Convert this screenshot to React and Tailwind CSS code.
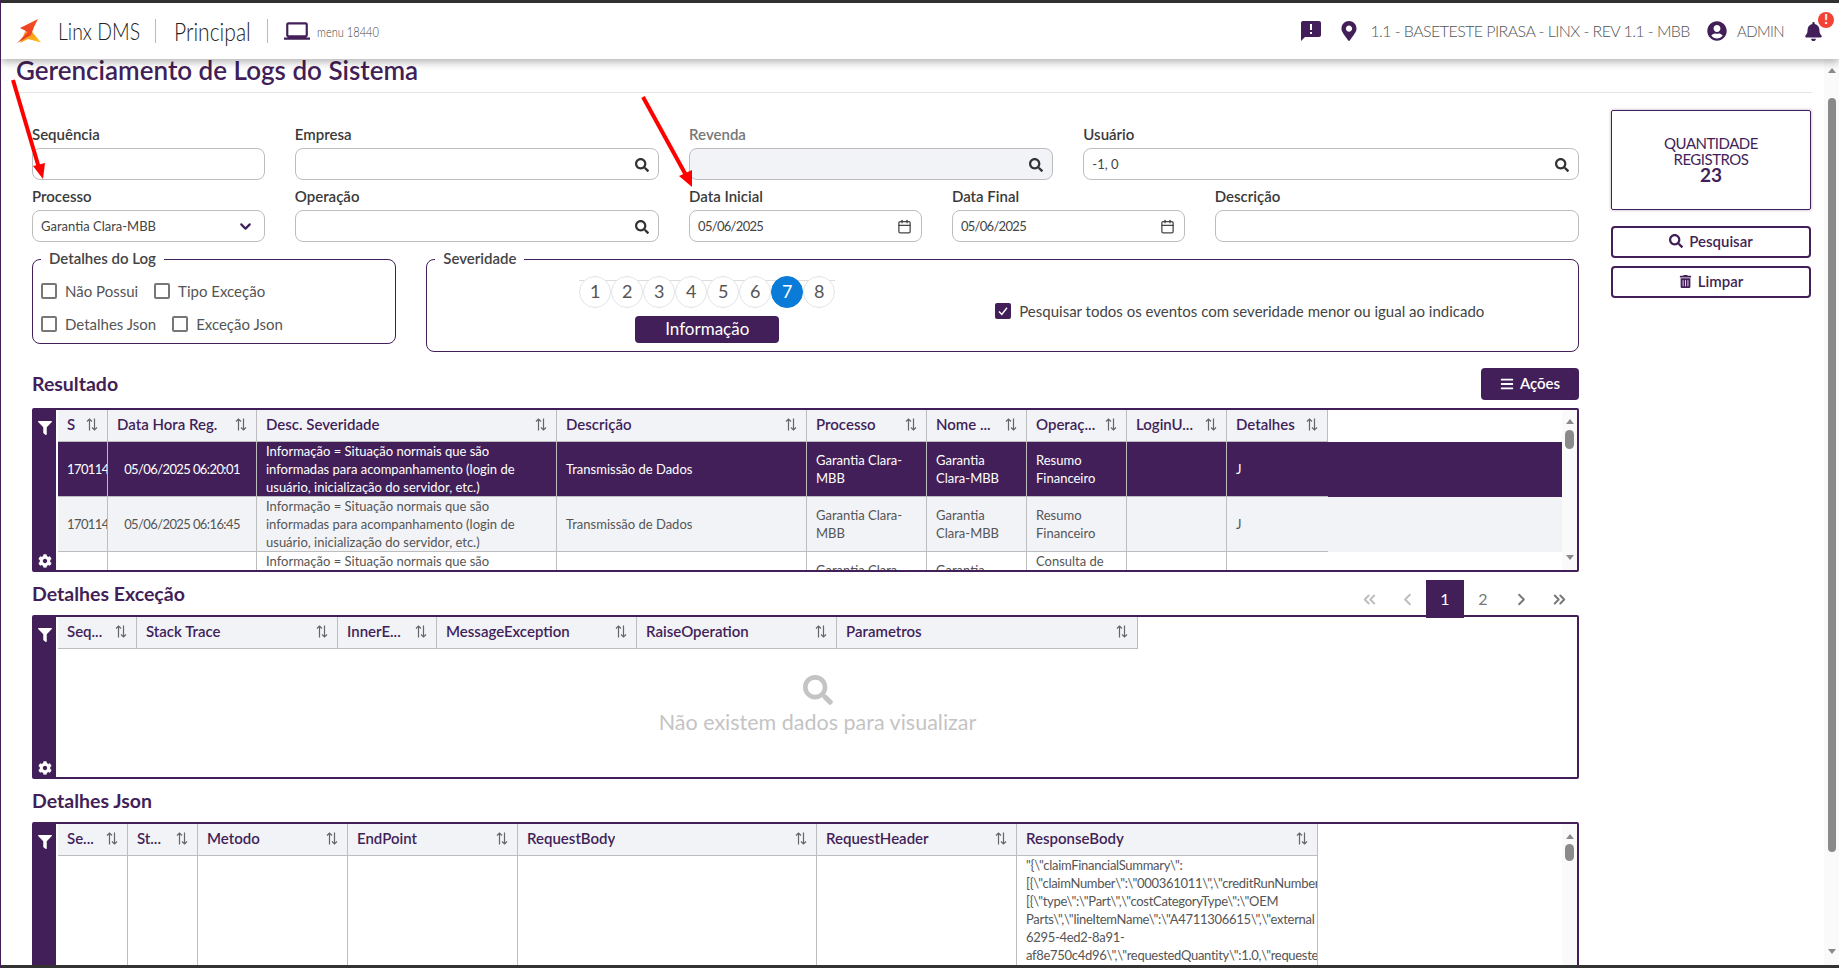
import React from 'react';
import { Calendar, ChevronDown, ChevronLeft, ChevronRight, ChevronsLeft, ChevronsRight } from 'lucide-react';
import { FaBars, FaBell, FaCog, FaFilter, FaMapMarkerAlt, FaSearch, FaTrashAlt, FaUserCircle } from 'react-icons/fa';
import { MdAnnouncement, MdLaptop } from 'react-icons/md';

const purple = 'text-[#421f58]';

const descSeveridade = 'Informação = Situação normais que são informadas para acompanhamento (login de usuário, inicialização do servidor, etc.)';

const resultCols = [
  { w: 'w-[50px]', label: 'S' },
  { w: 'w-[149px]', label: 'Data Hora Reg.' },
  { w: 'w-[300px]', label: 'Desc. Severidade' },
  { w: 'w-[250px]', label: 'Descrição' },
  { w: 'w-[120px]', label: 'Processo' },
  { w: 'w-[100px]', label: 'Nome ...' },
  { w: 'w-[100px]', label: 'Operaç...' },
  { w: 'w-[100px]', label: 'LoginU...' },
  { w: 'w-[101px]', label: 'Detalhes' },
];

const resultRows = [
  ['170114', '05/06/2025 06:20:01', descSeveridade, 'Transmissão de Dados', 'Garantia Clara-MBB', 'Garantia Clara-MBB', 'Resumo Financeiro', '', 'J'],
  ['170114', '05/06/2025 06:16:45', descSeveridade, 'Transmissão de Dados', 'Garantia Clara-MBB', 'Garantia Clara-MBB', 'Resumo Financeiro', '', 'J'],
  ['', '', descSeveridade, '', 'Garantia Clara-MBB', 'Garantia Clara-MBB', 'Consulta de Resumo Financeiro', '', ''],
];

const excecaoCols = [
  { w: 'w-[79px]', label: 'Seq...' },
  { w: 'w-[201px]', label: 'Stack Trace' },
  { w: 'w-[99px]', label: 'InnerE...' },
  { w: 'w-[200px]', label: 'MessageException' },
  { w: 'w-[200px]', label: 'RaiseOperation' },
  { w: 'w-[301px]', label: 'Parametros' },
];

const jsonCols = [
  { w: 'w-[70px]', label: 'Se...' },
  { w: 'w-[70px]', label: 'St...' },
  { w: 'w-[150px]', label: 'Metodo' },
  { w: 'w-[170px]', label: 'EndPoint' },
  { w: 'w-[299px]', label: 'RequestBody' },
  { w: 'w-[200px]', label: 'RequestHeader' },
  { w: 'w-[301px]', label: 'ResponseBody' },
];

const responseLines = [
  '"{\\"claimFinancialSummary\\":',
  '[{\\"claimNumber\\":\\"000361011\\",\\"creditRunNumber',
  '[{\\"type\\":\\"Part\\",\\"costCategoryType\\":\\"OEM',
  'Parts\\",\\"lineItemName\\":\\"A4711306615\\",\\"external',
  '6295-4ed2-8a91-',
  'af8e750c4d96\\",\\"requestedQuantity\\":1.0,\\"requeste',
];

function SortIcon() {
  return (
    <svg viewBox="0 0 12 13" className="h-[13px] w-3 shrink-0 text-[#666]" fill="none" stroke="currentColor" strokeWidth="1.2">
      <path d="M3.5 12.5V1M1 3.5L3.5 1L6 3.5" />
      <path d="M8.5 .5V12M6 9.5L8.5 12L11 9.5" />
    </svg>
  );
}

function Field({ label, span, disabled, value, icon }) {
  return (
    <div className={span}>
      <div className={`mb-[3px] h-5 text-[15px] leading-[18px] font-semibold ${disabled ? 'text-[#777]' : 'text-[#3a3a3a]'}`}>{label}</div>
      <div className="relative">
        <input
          readOnly
          value={value || ''}
          className={`block h-8 w-full rounded-lg border border-[#bdbdbd] px-2 text-[13px] text-[#444] outline-none ${icon === 'date' ? 'tracking-[-0.7px]' : ''} ${disabled ? 'bg-[#f1f3f7]' : 'bg-white'}`}
        />
        {icon === 'search' && <FaSearch className="absolute top-[10px] right-[10px] text-[#333]" size={14} />}
        {icon === 'date' && <Calendar className="absolute top-[9px] right-[10px] text-[#444]" size={15} />}
        {icon === 'select' && <ChevronDown className={`absolute top-2 right-[11px] ${purple}`} size={17} strokeWidth={3} />}
      </div>
    </div>
  );
}

function Check({ label }) {
  return (
    <label className="flex h-5 items-center gap-2 text-[15px] text-[#555]">
      <input type="checkbox" className="h-4 w-4 appearance-none rounded-[2px] border-2 border-[#777] bg-white" />
      {label}
    </label>
  );
}

function Triangle({ down }) {
  return (
    <svg viewBox="0 0 8 5" className="h-[5px] w-2 shrink-0 text-[#8a8a8a]" fill="currentColor">
      <path d={down ? 'M0 0H8L4 5Z' : 'M0 5H8L4 0Z'} />
    </svg>
  );
}

function TableShell({ height, children }) {
  return (
    <div className={`flex overflow-hidden rounded-[2px] border-2 border-[#421f58] ${height}`}>
      <div className="mr-[2px] flex w-[22px] shrink-0 flex-col items-center justify-between bg-[#421f58] pt-[11px] pb-[2px] text-white">
        <FaFilter size={14} />
        <FaCog size={14} />
      </div>
      {children}
    </div>
  );
}

function HeadRow({ cols }) {
  return (
    <thead>
      <tr>
        {cols.map((c) => (
          <th key={c.label} className="h-[32px] border-r border-b border-[#bdbdbd] bg-[#f1f3f7] p-0 pr-[9px] pb-[2px] pl-[9px] text-left text-[15px] font-semibold text-[#421f58] last:border-r-0">
            <span className="flex items-center justify-between">
              <span className="truncate whitespace-nowrap">{c.label}</span>
              <SortIcon />
            </span>
          </th>
        ))}
        <th className="p-0" />
      </tr>
    </thead>
  );
}

function ResultTable() {
  return (
    <TableShell height="h-[164px]">
      <div className="min-w-0 flex-1 overflow-hidden">
        <table className="w-full table-fixed border-separate border-spacing-0">
          <colgroup>
            {resultCols.map((c) => <col key={c.label} className={c.w} />)}
            <col />
          </colgroup>
          <HeadRow cols={resultCols} />
          <tbody>
            {resultRows.map((row, i) => (
              <tr key={i} className={i === 0 ? 'bg-[#421f58] text-white' : i === 1 ? 'bg-[#f1f3f7] text-[#555]' : 'bg-white text-[#555]'}>
                {row.map((cell, j) => (
                  <td
                    key={j}
                    className={`h-[55px] overflow-hidden border-r border-b border-[#bdbdbd] py-0 text-[13px] leading-[18px] ${j === 1 ? 'px-0 text-center tracking-[-0.6px]' : 'pr-2 pl-[9px]'} ${j === 0 ? 'whitespace-nowrap pr-0 tracking-[-0.6px]' : ''} ${j === 8 ? 'border-r-0' : ''}`}
                  >
                    {cell}
                  </td>
                ))}
                <td />
              </tr>
            ))}
          </tbody>
        </table>
      </div>
      <div className="flex w-[15px] shrink-0 flex-col items-center bg-[#fafafa] pt-[9px]">
        <Triangle />
        <div className="mt-[6px] h-[19px] w-[9px] rounded-full bg-[#8a8a8a]" />
        <div className="mt-auto mb-[10px]"><Triangle down /></div>
      </div>
    </TableShell>
  );
}

function ExcecaoTable() {
  return (
    <TableShell height="h-[164px]">
      <div className="min-w-0 flex-1 overflow-hidden">
        <table className="w-full table-fixed border-separate border-spacing-0">
          <colgroup>
            {excecaoCols.map((c) => <col key={c.label} className={c.w} />)}
            <col />
          </colgroup>
          <HeadRow cols={excecaoCols} />
        </table>
        <div className="flex flex-col items-center pt-[26px]">
          <FaSearch className="text-[#c4c4c4]" size={30} />
          <div className="mt-[3px] text-[21.5px] leading-7 text-[#c4c4c4]">Não existem dados para visualizar</div>
        </div>
      </div>
    </TableShell>
  );
}

function JsonTable() {
  return (
    <TableShell height="h-[240px]">
      <div className="min-w-0 flex-1 overflow-hidden">
        <table className="w-full table-fixed border-separate border-spacing-0">
          <colgroup>
            {jsonCols.map((c) => <col key={c.label} className={c.w} />)}
            <col />
          </colgroup>
          <HeadRow cols={jsonCols} />
          <tbody>
            <tr className="text-[#555]">
              {jsonCols.map((c, j) => (
                <td key={c.label} className="h-[200px] overflow-hidden border-r border-[#bdbdbd] py-0 pl-[9px] align-top text-[13px] leading-[18px] tracking-[-0.3px] last:border-r-0">
                  {j === 6 && responseLines.map((l) => <div key={l} className="whitespace-nowrap">{l}</div>)}
                </td>
              ))}
              <td />
            </tr>
          </tbody>
        </table>
      </div>
      <div className="flex w-[15px] shrink-0 flex-col items-center bg-[#fafafa] pt-[10px]">
        <Triangle />
        <div className="mt-[5px] h-[17px] w-[9px] rounded-full bg-[#8a8a8a]" />
      </div>
    </TableShell>
  );
}

function Pagination() {
  return (
    <div className="relative z-10 mr-px flex h-[38px] items-center">
      <span className="flex h-full w-[38px] items-center justify-center text-[#bdbdbd]"><ChevronsLeft size={19} strokeWidth={2.4} /></span>
      <span className="flex h-full w-[38px] items-center justify-center text-[#bdbdbd]"><ChevronLeft size={19} strokeWidth={2.4} /></span>
      <span className="flex h-full w-[38px] items-center justify-center bg-[#421f58] text-[16px] text-white">1</span>
      <span className="flex h-full w-[38px] items-center justify-center text-[16px] text-[#777]">2</span>
      <span className="flex h-full w-[38px] items-center justify-center text-[#777]"><ChevronRight size={19} strokeWidth={2.4} /></span>
      <span className="flex h-full w-[38px] items-center justify-center text-[#777]"><ChevronsRight size={19} strokeWidth={2.4} /></span>
    </div>
  );
}

function Logo() {
  return (
    <svg viewBox="0 0 24 24" className="h-6 w-6 shrink-0">
      <defs>
        <linearGradient id="lx1" x1="1" y1="0" x2="0" y2="1">
          <stop offset="0" stopColor="#f4511e" />
          <stop offset="1" stopColor="#e8352b" />
        </linearGradient>
        <linearGradient id="lx2" x1="0" y1="0" x2="1" y2="1">
          <stop offset="0" stopColor="#f7791f" />
          <stop offset="1" stopColor="#fdc317" />
        </linearGradient>
      </defs>
      <path d="M11 8L24 23.5L11 20L3 24L8 13Z" fill="url(#lx2)" />
      <path d="M21 0L3 9L11 13L0 24L14 16L17 8Z" fill="url(#lx1)" />
    </svg>
  );
}

function Steps() {
  return (
    <div className="relative flex w-[256px] justify-between">
      <div className="absolute top-1 right-0 left-0 h-px bg-[#dcdcdc]" />
      {[1, 2, 3, 4, 5, 6, 7, 8].map((n) => (
        <span
          key={n}
          className={`relative flex h-8 w-8 items-center justify-center rounded-full border pb-px text-[18px] ${n === 7 ? 'border-[#0a7bd6] bg-[#0a7bd6] text-white' : 'border-[#e2e4e8] bg-white text-[#555]'}`}
        >
          {n}
        </span>
      ))}
    </div>
  );
}

function SectionTitle({ children }) {
  return <h2 className="text-[19.5px] leading-7 font-bold text-[#421f58]">{children}</h2>;
}

export default function App() {
  return (
    <div className="relative flex h-[968px] w-[1839px] flex-col overflow-hidden border-l border-[#421f58] bg-white font-[Lato,sans-serif]">
      <div className="h-[3px] shrink-0 bg-[#333]" />

      <header className="relative z-20 flex h-[56px] shrink-0 items-center bg-white pr-[6px] pl-4 shadow-[0_3px_8px_rgba(0,0,0,0.3)]">
        <Logo />
        <span className="ml-[17px] w-[81px] whitespace-nowrap">
          <span className="inline-block origin-left scale-x-[.81] text-[24px] font-light text-[#222]">Linx DMS</span>
        </span>
        <span className="ml-4 h-6 w-px bg-[#bbb]" />
        <span className="ml-[18px] w-[75px] whitespace-nowrap">
          <span className="inline-block origin-left scale-x-[.81] text-[26px] font-light text-[#222]">Principal</span>
        </span>
        <span className="ml-[18px] h-6 w-px bg-[#bbb]" />
        <MdLaptop className={`ml-4 ${purple}`} size={26} />
        <span className="ml-[7px] w-[62px] whitespace-nowrap">
          <span className="inline-block origin-left scale-x-[.79] text-[14px] font-light text-[#444]">menu 18440</span>
        </span>

        <MdAnnouncement className={`ml-auto ${purple}`} size={24} />
        <FaMapMarkerAlt className={`ml-4 ${purple}`} size={20} />
        <span className="ml-[11px] text-[16px] font-light tracking-[-0.58px] text-[#555]">1.1 - BASETESTE PIRASA - LINX - REV 1.1 - MBB</span>
        <FaUserCircle className={`ml-[17px] ${purple}`} size={20} />
        <span className="ml-[10px] text-[15px] font-light tracking-[-0.6px] text-[#555]">ADMIN</span>
        <span className="relative ml-5 mr-[10px]">
          <FaBell className={purple} size={19} />
          <span className="absolute -top-[10px] -right-[11px] flex h-4 w-4 items-center justify-center rounded-full bg-[#f44336] text-[13px] leading-none font-black text-white">!</span>
        </span>
      </header>

      <div className="flex min-h-0 flex-1">
        <main className="min-w-0 flex-1 pl-[15px]">
          <div className="mr-3 h-[34px] border-b border-[#e5e5e5]">
            <h1 className="text-[26px] leading-[22px] font-semibold text-[#421f58]">Gerenciamento de Logs do Sistema</h1>
          </div>

          <div className="flex gap-8">
            <div className="ml-4 w-[1547px] shrink-0 pt-8">
              <div className="grid grid-cols-12 gap-x-[30px] gap-y-[7px]">
                <Field span="col-span-2" label="Sequência" />
                <Field span="col-span-3" label="Empresa" icon="search" />
                <Field span="col-span-3" label="Revenda" icon="search" disabled />
                <Field span="col-span-4" label="Usuário" icon="search" value="-1, 0" />
                <Field span="col-span-2" label="Processo" icon="select" value="Garantia Clara-MBB" />
                <Field span="col-span-3" label="Operação" icon="search" />
                <Field span="col-span-2" label="Data Inicial" icon="date" value="05/06/2025" />
                <Field span="col-span-2" label="Data Final" icon="date" value="05/06/2025" />
                <Field span="col-span-3" label="Descrição" />
              </div>

              <div className="mt-[7px] grid grid-cols-12 items-start gap-x-[30px]">
                <fieldset className="col-span-3 rounded-lg border border-[#421f58] pt-3 pr-2 pb-[9px] pl-2">
                  <legend className="h-5 px-2 text-[15px] leading-[18px] font-semibold text-[#444]">Detalhes do Log</legend>
                  <div className="flex gap-4">
                    <Check label="Não Possui" />
                    <Check label="Tipo Exceção" />
                  </div>
                  <div className="mt-[13px] flex gap-4">
                    <Check label="Detalhes Json" />
                    <Check label="Exceção Json" />
                  </div>
                </fieldset>

                <fieldset className="col-span-9 rounded-lg border border-[#421f58] pt-[7px] pb-[8px] pl-[152px]">
                  <legend className="-ml-[144px] h-5 px-2 text-[15px] leading-[18px] font-semibold text-[#444]">Severidade</legend>
                  <div className="flex items-start">
                    <div className="flex flex-col items-center">
                      <Steps />
                      <button className="mt-2 h-[27px] w-[144px] rounded-[4px] bg-[#421f58] pb-px text-[17px] text-white">Informação</button>
                    </div>
                    <label className="mt-[27px] ml-[160px] flex items-center gap-2 text-[15px] leading-4 text-[#444]">
                      <span className="flex h-4 w-4 items-center justify-center rounded-[2px] bg-[#421f58]">
                        <svg viewBox="0 0 12 12" className="h-3 w-3" fill="none" stroke="white" strokeWidth="1.4"><path d="M2 6.5L4.8 9.5L10 2.8" /></svg>
                      </span>
                      Pesquisar todos os eventos com severidade menor ou igual ao indicado
                    </label>
                  </div>
                </fieldset>
              </div>

              <div className="mt-4 mb-2 flex h-8 items-center justify-between">
                <SectionTitle>Resultado</SectionTitle>
                <button className="flex h-8 w-[98px] items-center justify-center gap-[6px] rounded-[4px] bg-[#421f58] pb-px text-[15px] font-semibold text-white">
                  <FaBars size={14} />
                  Ações
                </button>
              </div>
              <ResultTable />

              <div className="mt-2 flex h-[35px] items-start justify-between">
                <SectionTitle>Detalhes Exceção</SectionTitle>
                <Pagination />
              </div>
              <ExcecaoTable />

              <div className="mt-2 mb-[7px]">
                <SectionTitle>Detalhes Json</SectionTitle>
              </div>
              <JsonTable />
            </div>

            <aside className="w-[200px] shrink-0 pt-[17px]">
              <div className={`flex h-[100px] flex-col items-center justify-center rounded-[2px] border border-[#421f58] pb-[2px] text-[15px] leading-4 tracking-[-0.5px] shadow-[0_0_3px_rgba(66,31,88,0.4)] ${purple}`}>
                <span>QUANTIDADE</span>
                <span>REGISTROS</span>
                <span className="text-[19px] font-bold tracking-normal">23</span>
              </div>
              <button className={`mt-4 flex h-8 w-full items-center justify-center gap-[6px] rounded-[4px] border-2 border-[#421f58] pb-[2px] text-[15px] font-semibold ${purple}`}>
                <FaSearch size={14} />
                Pesquisar
              </button>
              <button className={`mt-2 flex h-8 w-full items-center justify-center gap-[6px] rounded-[4px] border-2 border-[#421f58] pb-[2px] text-[15px] font-semibold ${purple}`}>
                <FaTrashAlt size={13} />
                Limpar
              </button>
            </aside>
          </div>
        </main>

        <div className="flex w-[15px] shrink-0 flex-col items-center bg-[#fafafa] pt-[9px]">
          <Triangle />
          <div className="mt-[25px] h-[754px] w-2 rounded-full bg-[#8a8a8a]" />
          <div className="mt-auto mb-[11px]"><Triangle down /></div>
        </div>
      </div>

      <div className="relative z-20 h-[3px] shrink-0 bg-[#333]" />

      {/* setas vermelhas da anotacao, por cima da tela */}
      <svg className="pointer-events-none absolute -left-px top-0 z-30 h-[968px] w-[1839px]" viewBox="0 0 1839 968">
        <path d="M13 80L39 168" stroke="#ff0000" strokeWidth="4" fill="none" />
        <path d="M43 179L33 166L45 163Z" fill="#ff0000" />
        <path d="M643 97L687 177" stroke="#ff0000" strokeWidth="4" fill="none" />
        <path d="M692 187L679 176L692 170Z" fill="#ff0000" />
      </svg>
    </div>
  );
}
